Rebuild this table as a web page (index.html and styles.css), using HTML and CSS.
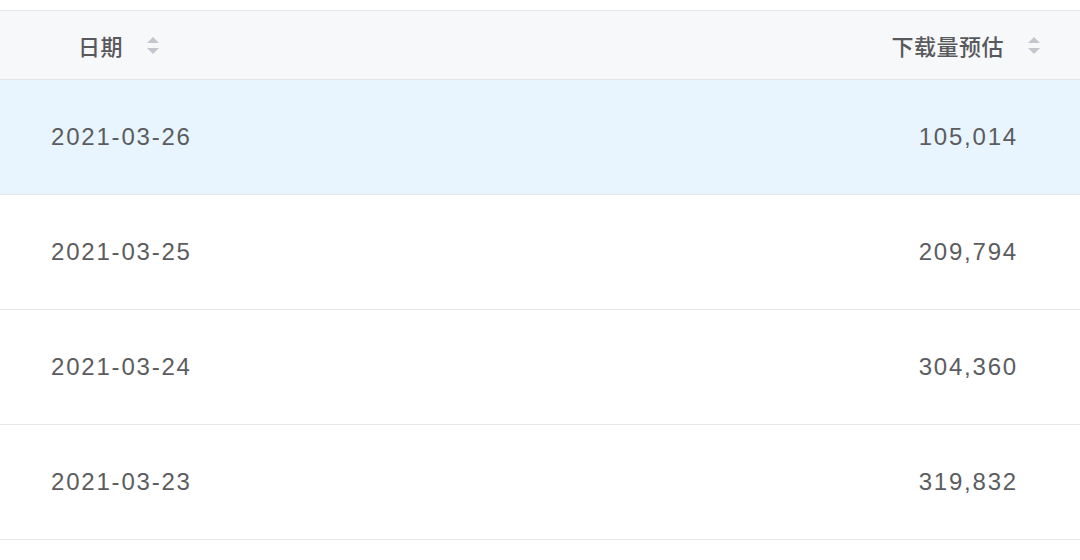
FILE: index.html
```html
<!DOCTYPE html>
<html lang="zh">
<head>
<meta charset="utf-8">
<link rel="stylesheet" href="styles.css">
</head>
<body>
<div class="table">
  <div class="row head">
    <div class="cell c-date"><span class="htext">日期</span><svg class="sort" viewBox="0 0 12 17" width="12" height="17"><path d="M6 0 L12 6 H0 Z"/><path d="M0 11 H12 L6 17 Z"/></svg></div>
    <div class="cell c-num"><span class="htext">下载量预估</span><svg class="sort" viewBox="0 0 12 17" width="12" height="17"><path d="M6 0 L12 6 H0 Z"/><path d="M0 11 H12 L6 17 Z"/></svg></div>
  </div>
  <div class="row body active">
    <div class="cell c-date">2021-03-26</div>
    <div class="cell c-num">105,014</div>
  </div>
  <div class="row body">
    <div class="cell c-date">2021-03-25</div>
    <div class="cell c-num">209,794</div>
  </div>
  <div class="row body">
    <div class="cell c-date">2021-03-24</div>
    <div class="cell c-num">304,360</div>
  </div>
  <div class="row body">
    <div class="cell c-date">2021-03-23</div>
    <div class="cell c-num">319,832</div>
  </div>
</div>
</body>
</html>
```
FILE: styles.css
```css
html, body {
  margin: 0;
  padding: 0;
  background: #ffffff;
}
body {
  padding-top: 10px;
  font-family: "Liberation Sans", "Noto Sans CJK SC", sans-serif;
  color: #5b5c60;
}
.table {
  border-top: 1px solid #e6e7ea;
}
.row {
  display: grid;
  grid-template-columns: 1fr 1fr;
  border-bottom: 1px solid #e4e6ea;
}
.head {
  height: 68px;
  background: #f7f8fa;
}
.body {
  height: 114px;
}
.active {
  background: #e9f5fe;
}
.cell {
  display: flex;
  align-items: center;
}
.c-num {
  justify-content: flex-end;
}
.head .c-date {
  padding-left: 78px;
}
.head .c-num {
  padding-right: 40px;
}
.htext {
  font-family: "Noto Sans CJK SC", sans-serif;
  font-size: 22px;
  font-weight: 500;
  letter-spacing: 0.5px;
  color: #58595c;
}
.sort {
  margin-left: 24px;
  fill: #c3c6cc;
}
.body .cell {
  font-size: 24px;
  letter-spacing: 1.8px;
}
.body .c-date {
  padding-left: 51px;
}
.body .c-num {
  padding-right: 62px;
}
```
